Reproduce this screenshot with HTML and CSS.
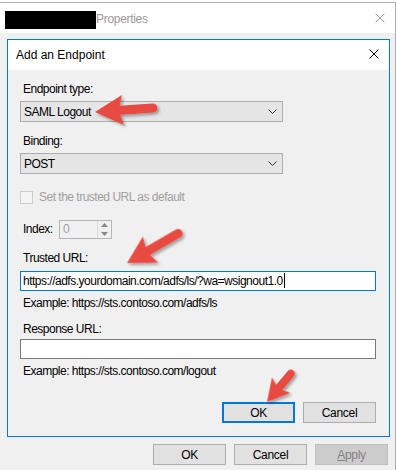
FILE: index.html
```html
<!DOCTYPE html>
<html lang="en">
<head>
    <meta charset="UTF-8">
    <title>Properties - Add an Endpoint</title>
    <link rel="stylesheet" href="styles.css">
</head>
<body>
    <div class="ventana">
        <div class="barra-titulo">
            <span class="tapado"></span>
            <span class="titulo-gris">Properties</span>
            <svg class="cerrar cerrar-gris" width="10" height="10" viewBox="0 0 10 10">
                <path d="M0.5 0.5 L9.5 9.5 M9.5 0.5 L0.5 9.5" stroke="#9a9a9a" stroke-width="1"/>
            </svg>
        </div>

        <div class="cuerpo">
            <div class="dialogo">
                <div class="barra-dialogo">
                    <span>Add an Endpoint</span>
                    <svg class="cerrar" width="10" height="10" viewBox="0 0 10 10">
                        <path d="M0.5 0.5 L9.5 9.5 M9.5 0.5 L0.5 9.5" stroke="#000" stroke-width="1"/>
                    </svg>
                </div>

                <div class="formulario">
                    <div class="etiqueta e-tipo">Endpoint type:</div>
                    <div class="combo">
                        <span>SAML Logout</span>
                        <svg width="9" height="5" viewBox="0 0 9 5"><path d="M0.5 0.5 L4.5 4.5 L8.5 0.5" fill="none" stroke="#333" stroke-width="1"/></svg>
                    </div>

                    <div class="etiqueta e-binding">Binding:</div>
                    <div class="combo">
                        <span>POST</span>
                        <svg width="9" height="5" viewBox="0 0 9 5"><path d="M0.5 0.5 L4.5 4.5 L8.5 0.5" fill="none" stroke="#333" stroke-width="1"/></svg>
                    </div>

                    <label class="casilla">
                        <span class="caja"></span>
                        <span>Set the trusted URL as default</span>
                    </label>

                    <div class="fila-indice">
                        <span class="etiqueta">Index:</span>
                        <div class="spin">
                            <span class="valor">0</span>
                            <div class="flechas">
                                <svg width="7" height="4" viewBox="0 0 7 4"><path d="M0 4 L3.5 0 L7 4 Z" fill="#888"/></svg>
                                <svg width="7" height="4" viewBox="0 0 7 4"><path d="M0 0 L3.5 4 L7 0 Z" fill="#888"/></svg>
                            </div>
                        </div>
                    </div>

                    <div class="etiqueta e-trusted">Trusted URL:</div>
                    <div class="texto activo">https://adfs.yourdomain.com/adfs/ls/?wa=wsignout1.0<span class="cursor"></span></div>
                    <div class="ejemplo">Example: https://sts.contoso.com/adfs/ls</div>

                    <div class="etiqueta e-response">Response URL:</div>
                    <div class="texto"></div>
                    <div class="ejemplo">Example: https://sts.contoso.com/logout</div>

                    <div class="botones botones-dialogo">
                        <button class="boton boton-foco">OK</button>
                        <button class="boton">Cancel</button>
                    </div>
                </div>
            </div>

            <div class="botones botones-ventana">
                <button class="boton">OK</button>
                <button class="boton">Cancel</button>
                <button class="boton boton-apagado"><u>A</u>pply</button>
            </div>
        </div>
    </div>

    <!-- flechas rojas encima de la captura -->
    <svg class="flechas-rojas" width="397" height="470" viewBox="0 0 397 470">
        <defs>
            <filter id="sombra" x="-30%" y="-30%" width="160%" height="160%">
                <feDropShadow dx="2" dy="2" stdDeviation="1.5" flood-color="#000" flood-opacity="0.35"/>
            </filter>
        </defs>
        <g fill="#e84a3f" filter="url(#sombra)">
            <g transform="translate(95,112) rotate(-4)">
                <path d="M0 0 L28 -15 L25 -4.5 L58 -4.5 A4.5 4.5 0 0 1 58 4.5 L25 4.5 L28 15 Z"/>
            </g>
            <g transform="translate(127,263) rotate(-30)">
                <path d="M0 0 L27 -15 L24 -4.5 L59 -4.5 A4.5 4.5 0 0 1 59 4.5 L24 4.5 L27 15 Z"/>
            </g>
            <g transform="translate(267,402) rotate(-50)">
                <path d="M0 0 L22 -12 L19 -4 L37 -4 A4 4 0 0 1 37 4 L19 4 L22 12 Z"/>
            </g>
        </g>
    </svg>
</body>
</html>
```

FILE: styles.css
```css
body {
    margin: 0;
    background-color: white;
    font-family: 'Liberation Sans', Arial, sans-serif;
    font-size: 12px;
    color: #000;
    overflow: hidden;
}

.ventana {
    box-sizing: border-box;
    width: 397px;
    height: 480px;
    margin: 2px 0 0 -1px;
    border: 1px solid #adadad;
    background-color: #f0f0f0;
}

.barra-titulo {
    position: relative;
    height: 30px;
    background-color: white;
    display: flex;
    align-items: center;
}

.tapado {
    display: block;
    width: 91px;
    height: 18px;
    margin: 3px 0 0 5px;
    background-color: black;
}

.titulo-gris {
    color: #9a9a9a;
    margin-top: 2px;
    letter-spacing: -0.3px;
}

.cerrar {
    position: absolute;
    right: 10px;
    top: 10px;
}

.cuerpo {
    padding: 6px 0 0 7px;
}

.dialogo {
    box-sizing: border-box;
    width: 383px;
    border: 1px solid #0078d7;
}

.barra-dialogo {
    position: relative;
    height: 30px;
    background-color: white;
    display: flex;
    align-items: center;
    padding-left: 8px;
}

.barra-dialogo .cerrar {
    right: 10px;
    top: 9px;
}

/* Segoe UI es más estrecha que Arial */
.formulario,
.botones {
    letter-spacing: -0.5px;
}

.formulario {
    padding: 12px 12px 13px 12px;
}

.etiqueta {
    line-height: 15px;
    padding-left: 3px;
}

.e-binding {
    margin-top: 12px;
}

.e-tipo {
    margin-bottom: 4px;
}

.e-binding {
    margin-bottom: 4px;
}

.combo {
    box-sizing: border-box;
    width: 263px;
    height: 21px;
    background-color: #e5e5e5;
    border: 1px solid #adadad;
    display: flex;
    align-items: center;
    justify-content: space-between;
    padding: 0 5px 0 3px;
}

.casilla {
    display: flex;
    align-items: center;
    gap: 6px;
    margin-top: 16px;
    color: #a0a0a0;
    line-height: 15px;
}

.caja {
    box-sizing: border-box;
    width: 13px;
    height: 13px;
    border: 1px solid #cccccc;
    background-color: #f4f4f4;
}

.fila-indice {
    display: flex;
    align-items: center;
    margin-top: 15px;
}

.fila-indice .etiqueta {
    width: 36px;
}

.spin {
    box-sizing: border-box;
    width: 53px;
    height: 19px;
    border: 1px solid #b5b5b5;
    background-color: #f0f0f0;
    display: flex;
    justify-content: space-between;
}

.valor {
    color: #a0a0a0;
    padding: 1px 0 0 3px;
    line-height: 15px;
}

.flechas {
    width: 13px;
    border-left: 1px solid #dcdcdc;
    display: flex;
    flex-direction: column;
    justify-content: space-around;
    align-items: center;
}

.flechas svg {
    display: block;
}

.e-trusted {
    margin-top: 12px;
    margin-bottom: 5px;
}

.e-response {
    margin-top: 11px;
    margin-bottom: 2px;
}

.texto {
    box-sizing: border-box;
    width: 356px;
    height: 20px;
    background-color: white;
    border: 1px solid #7a7a7a;
    padding: 1px 0 0 2px;
    line-height: 16px;
    white-space: nowrap;
}

.texto.activo {
    border-color: #0078d7;
}

.cursor {
    display: inline-block;
    width: 1px;
    height: 15px;
    background-color: black;
    vertical-align: top;
    margin-left: 1px;
}

.ejemplo {
    line-height: 15px;
    padding-left: 3px;
    margin-top: 5px;
}

.botones {
    display: flex;
    justify-content: flex-end;
    gap: 8px;
}

.botones-dialogo {
    margin-top: 23px;
    padding-right: 1px;
}

.botones-ventana {
    margin-top: 7px;
    width: 381px;
}

.boton {
    box-sizing: border-box;
    width: 73px;
    height: 21px;
    padding: 0;
    font-family: 'Liberation Sans', Arial, sans-serif;
    font-size: 12px;
    letter-spacing: -0.3px;
    color: #000;
    background-color: #e1e1e1;
    border: 1px solid #adadad;
}

.boton-foco {
    border: 2px solid #0078d7;
}

.boton-apagado {
    background-color: #cccccc;
    border-color: #bfbfbf;
    color: #838383;
}

.flechas-rojas {
    position: absolute;
    top: 0;
    left: 0;
    pointer-events: none;
}
```
